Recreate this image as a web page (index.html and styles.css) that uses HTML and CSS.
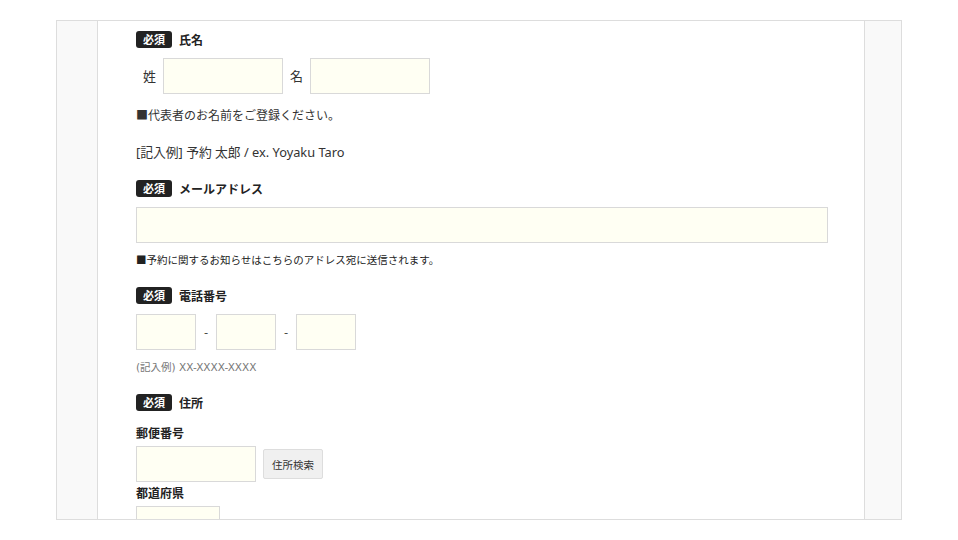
FILE: index.html
```html
<!DOCTYPE html>
<html lang="ja">
<head>
<meta charset="utf-8">
<title>Form</title>
<link rel="stylesheet" href="styles.css">
</head>
<body>
<div class="frame">
  <div class="side side-left"></div>
  <main class="main">
    <section class="field">
      <div class="heading"><span class="badge">必須</span><span class="label">氏名</span></div>
      <div class="name-row">
        <span class="name-cap">姓</span><input class="input w120" type="text">
        <span class="name-cap">名</span><input class="input w120" type="text">
      </div>
      <p class="note note-name">■代表者のお名前をご登録ください。</p>
      <p class="example">[記入例] 予約 太郎 / ex. Yoyaku Taro</p>
    </section>

    <section class="field field-mail">
      <div class="heading"><span class="badge">必須</span><span class="label">メールアドレス</span></div>
      <input class="input wfull" type="text">
      <p class="note note-small">■予約に関するお知らせはこちらのアドレス宛に送信されます。</p>
    </section>

    <section class="field field-tel">
      <div class="heading"><span class="badge">必須</span><span class="label">電話番号</span></div>
      <div class="tel-row">
        <input class="input w60" type="text"><span class="dash">-</span><input class="input w60" type="text"><span class="dash">-</span><input class="input w60" type="text">
      </div>
      <p class="tel-example">(記入例) XX-XXXX-XXXX</p>
    </section>

    <section class="field field-addr">
      <div class="heading"><span class="badge">必須</span><span class="label">住所</span></div>
      <p class="sub-label sub-zip">郵便番号</p>
      <div class="zip-row">
        <input class="input w120" type="text"><button class="search-btn" type="button">住所検索</button>
      </div>
      <p class="sub-label sub-pref">都道府県</p>
      <input class="input w84" type="text">
    </section>
  </main>
  <div class="side side-right"></div>
</div>
</body>
</html>
```

FILE: styles.css
```css
html, body {
  margin: 0;
  padding: 0;
  background: #ffffff;
}

body {
  font-family: "Noto Sans CJK JP", "Noto Sans", sans-serif;
  color: #333333;
}

p {
  margin: 0;
}

.frame {
  box-sizing: border-box;
  margin: 20px 0 0 56px;
  width: 846px;
  height: 500px;
  border: 1px solid #dddddd;
  display: flex;
  overflow: hidden;
}

.side {
  background: #f9f9f9;
  flex: none;
}

.side-left {
  width: 40px;
  border-right: 1px solid #dddddd;
}

.side-right {
  width: 36px;
  border-left: 1px solid #dddddd;
}

.main {
  flex: 1;
  min-width: 0;
  padding: 10px 36px 0 38px;
  background: #ffffff;
}

.heading {
  display: flex;
  align-items: center;
  height: 17px;
}

.badge {
  display: inline-flex;
  align-items: center;
  justify-content: center;
  width: 36px;
  height: 17px;
  border-radius: 3px;
  background: #222222;
  color: #ffffff;
  font-size: 11px;
  font-weight: 700;
  line-height: 1;
}

.label {
  margin-left: 7px;
  font-size: 12px;
  font-weight: 700;
  color: #222222;
  line-height: 16px;
}

.input {
  box-sizing: border-box;
  display: block;
  height: 36px;
  margin: 0;
  padding: 0 6px;
  border: 1px solid #d9d9d9;
  border-radius: 0;
  background: #fffff3;
  font: inherit;
}

.w120 { width: 120px; }
.w60 { width: 60px; }
.w84 { width: 84px; }
.wfull { width: 100%; }

.name-row {
  display: flex;
  align-items: center;
  margin-top: 10px;
}

.name-cap {
  padding: 0 7px;
  font-size: 13px;
  line-height: 36px;
  color: #333333;
}

.note-name {
  margin-top: 12px;
  font-size: 12px;
  line-height: 18px;
}

.example {
  margin-top: 18px;
  font-family: "Noto Sans", "Noto Sans CJK JP", sans-serif;
  font-size: 12.8px;
  line-height: 20px;
}

.field-mail {
  margin-top: 18px;
}

.field-mail .input {
  margin-top: 10px;
}

.note-small {
  margin-top: 9px;
  font-size: 10.5px;
  line-height: 16px;
  color: #222222;
}

.field-tel {
  margin-top: 19px;
}

.tel-row {
  display: flex;
  align-items: center;
  margin-top: 10px;
}

.dash {
  width: 20px;
  text-align: center;
  font-size: 12px;
  line-height: 36px;
}

.tel-example {
  margin-top: 9px;
  font-family: "DejaVu Sans", "Noto Sans CJK JP", sans-serif;
  font-size: 10.5px;
  line-height: 16px;
  color: #777777;
}

.field-addr {
  margin-top: 19px;
}

.sub-label {
  font-size: 12px;
  font-weight: 700;
  line-height: 18px;
  color: #222222;
}

.sub-zip {
  margin-top: 13px;
}

.zip-row {
  display: flex;
  align-items: center;
  margin-top: 4px;
}

.search-btn {
  box-sizing: border-box;
  margin-left: 7px;
  width: 60px;
  height: 30px;
  padding: 0;
  border: 1px solid #dddddd;
  border-radius: 2px;
  background: #f0f0f0;
  color: #333333;
  font-family: inherit;
  font-size: 10.5px;
}

.sub-pref {
  margin-top: 2px;
}

.field-addr > .input.w84 {
  margin-top: 4px;
}
```
